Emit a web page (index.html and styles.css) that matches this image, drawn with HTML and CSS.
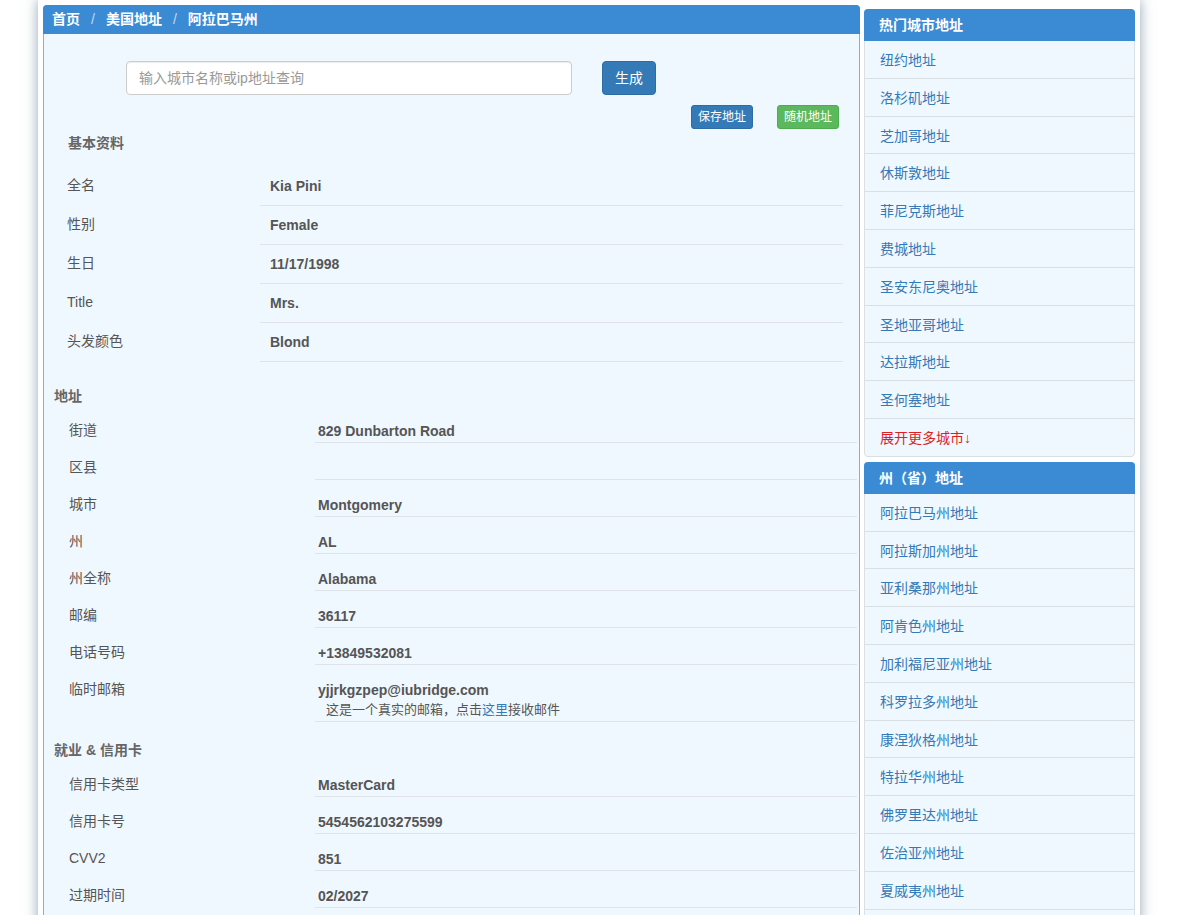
FILE: index.html
```html
<!DOCTYPE html>
<html lang="zh-CN">
<head>
<meta charset="utf-8">
<title>阿拉巴马州地址</title>
<link rel="stylesheet" href="styles.css">
</head>
<body>
<div class="page">
  <div class="main-panel">
    <div class="crumbs">
      <a class="crumb">首页</a><span class="sep">/</span><a class="crumb">美国地址</a><span class="sep">/</span><span class="crumb">阿拉巴马州</span>
    </div>
    <div class="main-body">
      <div class="search">
        <input class="search-input" type="text" placeholder="输入城市名称或ip地址查询">
        <button class="btn btn-primary btn-gen">生成</button>
      </div>
      <div class="actions">
        <button class="btn btn-primary btn-xs">保存地址</button>
        <button class="btn btn-success btn-xs">随机地址</button>
      </div>

      <h3 class="sec sec-basic">基本资料</h3>
      <div class="basic">
        <div class="brow"><span class="k">全名</span><span class="v">Kia Pini</span></div>
        <div class="brow"><span class="k">性别</span><span class="v">Female</span></div>
        <div class="brow"><span class="k">生日</span><span class="v">11/17/1998</span></div>
        <div class="brow"><span class="k">Title</span><span class="v">Mrs.</span></div>
        <div class="brow"><span class="k">头发颜色</span><span class="v">Blond</span></div>
      </div>

      <h3 class="sec sec-addr">地址</h3>
      <div class="info">
        <div class="irow"><span class="k">街道</span><span class="v">829 Dunbarton Road</span></div>
        <div class="irow"><span class="k">区县</span><span class="v"></span></div>
        <div class="irow"><span class="k">城市</span><span class="v">Montgomery</span></div>
        <div class="irow"><span class="k">州</span><span class="v">AL</span></div>
        <div class="irow"><span class="k">州全称</span><span class="v">Alabama</span></div>
        <div class="irow"><span class="k">邮编</span><span class="v">36117</span></div>
        <div class="irow"><span class="k">电话号码</span><span class="v">+13849532081</span></div>
        <div class="irow"><span class="k">临时邮箱</span><span class="v">yjjrkgzpep@iubridge.com<span class="note">这是一个真实的邮箱，点击<a class="link">这里</a>接收邮件</span></span></div>
      </div>

      <h3 class="sec sec-job">就业 &amp; 信用卡</h3>
      <div class="info">
        <div class="irow"><span class="k">信用卡类型</span><span class="v">MasterCard</span></div>
        <div class="irow"><span class="k">信用卡号</span><span class="v">5454562103275599</span></div>
        <div class="irow"><span class="k">CVV2</span><span class="v">851</span></div>
        <div class="irow"><span class="k">过期时间</span><span class="v">02/2027</span></div>
      </div>
    </div>
  </div>

  <div class="sidebar">
    <div class="side-panel">
      <div class="side-head">热门城市地址</div>
      <ul class="side-list">
        <li><a>纽约地址</a></li>
        <li><a>洛杉矶地址</a></li>
        <li><a>芝加哥地址</a></li>
        <li><a>休斯敦地址</a></li>
        <li><a>菲尼克斯地址</a></li>
        <li><a>费城地址</a></li>
        <li><a>圣安东尼奥地址</a></li>
        <li><a>圣地亚哥地址</a></li>
        <li><a>达拉斯地址</a></li>
        <li><a>圣何塞地址</a></li>
        <li><a class="more">展开更多城市↓</a></li>
      </ul>
    </div>
    <div class="side-panel side-panel-2">
      <div class="side-head">州（省）地址</div>
      <ul class="side-list">
        <li><a>阿拉巴马州地址</a></li>
        <li><a>阿拉斯加州地址</a></li>
        <li><a>亚利桑那州地址</a></li>
        <li><a>阿肯色州地址</a></li>
        <li><a>加利福尼亚州地址</a></li>
        <li><a>科罗拉多州地址</a></li>
        <li><a>康涅狄格州地址</a></li>
        <li><a>特拉华州地址</a></li>
        <li><a>佛罗里达州地址</a></li>
        <li><a>佐治亚州地址</a></li>
        <li><a>夏威夷州地址</a></li>
        <li><a>爱达荷州地址</a></li>
        <li><a>伊利诺伊州地址</a></li>
      </ul>
    </div>
  </div>
</div>
</body>
</html>
```

FILE: styles.css
```css
* {
  box-sizing: border-box;
}

html,
body {
  margin: 0;
  padding: 0;
  background: #fff;
}

body {
  font-family: "Liberation Sans", "Noto Sans CJK SC", sans-serif;
  font-size: 14px;
  color: #555;
}

.page {
  width: 1102px;
  margin-left: 38px;
  min-height: 1000px;
  padding: 0 5px;
  background: #fff;
  box-shadow: 0 0 12px rgba(40, 80, 110, 0.5);
  display: flex;
  align-items: flex-start;
  gap: 4px;
}

/* ---------- main panel ---------- */
.main-panel {
  width: 817px;
  flex: none;
  margin-top: 5px;
  background: #f0f8ff;
  border: 1px solid #8eadc6;
  border-radius: 4px;
}

.crumbs {
  margin: -1px -1px 0;
  height: 29px;
  line-height: 29px;
  padding-left: 9px;
  background: #3a8bd4;
  border-radius: 4px 4px 0 0;
  color: #fff;
  font-weight: bold;
  font-size: 14px;
  white-space: nowrap;
}

.crumb {
  color: #fff;
}

.sep {
  color: #c9d8e8;
  font-weight: normal;
  margin: 0 11px;
}

.main-body {
  padding: 0 1px 40px 10px;
}

.search {
  display: flex;
  align-items: center;
  margin-top: 27px;
  margin-left: 72px;
  gap: 30px;
}

.search-input {
  width: 446px;
  height: 34px;
  padding: 6px 12px;
  border: 1px solid #ccc;
  border-radius: 4px;
  background: #fff;
  font-family: inherit;
  font-size: 14px;
  color: #555;
  outline: none;
  box-shadow: inset 0 1px 1px rgba(0, 0, 0, 0.075);
}

.search-input::placeholder {
  color: #999;
}

.btn {
  font-family: inherit;
  color: #fff;
  border: 1px solid transparent;
  cursor: pointer;
  white-space: nowrap;
}

.btn-primary {
  background: #337ab7;
  border-color: #2e6da4;
}

.btn-success {
  background: #5cb85c;
  border-color: #4cae4c;
}

.btn-gen {
  height: 34px;
  padding: 6px 12px;
  font-size: 14px;
  line-height: 20px;
  border-radius: 4px;
}

.btn-xs {
  height: 24px;
  padding: 3px 6px;
  font-size: 12px;
  line-height: 16px;
  border-radius: 3px;
}

.actions {
  display: flex;
  justify-content: flex-end;
  gap: 24px;
  margin-top: 10px;
  padding-right: 19px;
}

.sec {
  margin: 0;
  font-size: 14px;
  font-weight: bold;
  color: #666;
  line-height: 17px;
  padding-bottom: 1px;
}

.sec-basic {
  margin-top: 4px;
  padding-left: 14px;
  line-height: 20px;
  padding-bottom: 0;
}

.sec-addr {
  margin-top: 26px;
}

.sec-job {
  margin-top: 20px;
}

/* basic info */
.basic {
  margin-top: 14px;
  margin-left: 3px;
  width: 786px;
}

.brow {
  display: grid;
  grid-template-columns: 203px 1fr;
}

.brow .k,
.brow .v {
  padding: 9px 0 9px 10px;
  line-height: 20px;
}

.brow .k {
  color: #555;
  margin-top: -1px;
}

.brow .v {
  font-weight: bold;
  border-bottom: 1px solid #e0e4e8;
}

/* address / card info */
.info {
  width: 803px;
}

.irow {
  display: grid;
  grid-template-columns: 261px 1fr;
}

.irow .k,
.irow .v {
  padding-top: 15px;
  line-height: 20px;
}

.irow .k {
  padding-left: 15px;
  margin-top: -1px;
}

.irow .v {
  padding-left: 3px;
  font-weight: bold;
  border-bottom: 1px solid #e0e4e8;
  min-height: 37px;
  padding-bottom: 1px;
}

.note {
  display: block;
  font-weight: normal;
  font-size: 13px;
  padding-left: 8px;
  color: #555;
}

.link {
  color: #337ab7;
}

/* ---------- sidebar ---------- */
.sidebar {
  width: 271px;
  flex: none;
  margin-top: 9px;
}

.side-panel {
  background: #f0f8ff;
  border: 1px solid #dadfe4;
  border-radius: 4px;
}

.side-panel-2 {
  margin-top: 5px;
}

.side-head {
  margin: -1px -1px 0;
  height: 32px;
  line-height: 32px;
  padding-left: 15px;
  background: #3a8bd4;
  border-radius: 4px 4px 0 0;
  color: #fff;
  font-weight: bold;
  font-size: 14px;
}

.side-list {
  list-style: none;
  margin: 0;
  padding: 0;
}

.side-list li {
  padding: 10px 15px 8px;
  line-height: 18.8px;
  border-bottom: 1px solid #dadfe4;
}

.side-list li:last-child {
  border-bottom: none;
}

.side-list a {
  color: #337ab7;
}

.side-list a.more {
  color: #dd1f26;
}
```
